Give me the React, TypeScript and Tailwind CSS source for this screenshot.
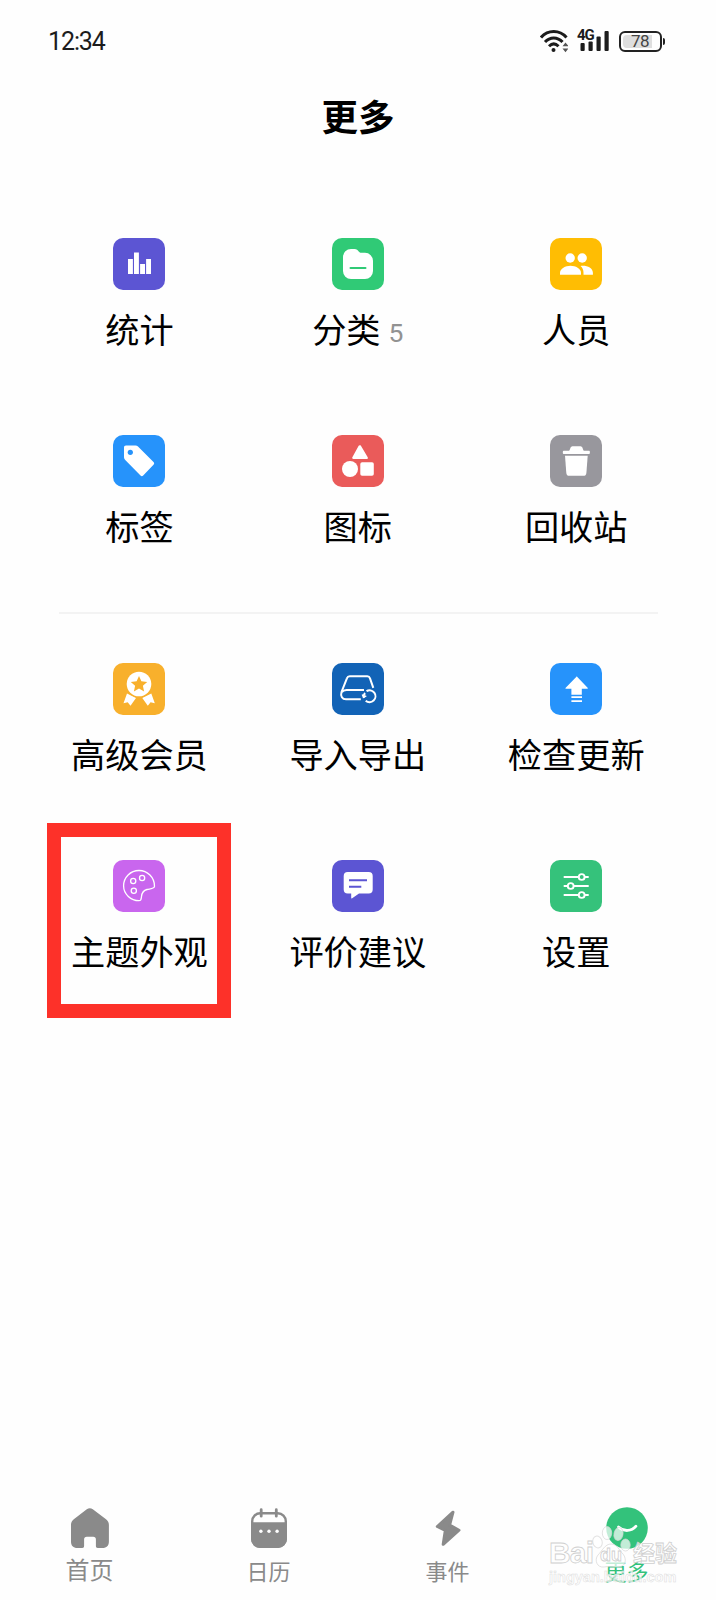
import type { ReactNode } from 'react';

interface Tile {
  label: string;
  bg: string;
  icon: ReactNode;
  count?: number;
  highlighted?: boolean;
}

interface Tab {
  label: string;
  icon: ReactNode;
  className: string;
}

const libraryTiles: Tile[] = [
  {
    label: '统计',
    bg: 'bg-[#5c55d3]',
    icon: <path d="M15 21h4.9v15H15zM21 14.6h4.9V36H21zM27.1 26H32v10h-4.9zM33.1 21H38v15h-4.9z" />,
  },
  {
    label: '分类',
    bg: 'bg-[#30ca76]',
    count: 5,
    icon: (
      <>
        <path d="M11 19a8 8 0 0 1 8-8h3.500c2.200 0 3.200 1 4.200 2.500.8 1 1.500 1.300 2.500 1.300H33a8 8 0 0 1 8 8V33a8 8 0 0 1-8 8H19a8 8 0 0 1-8-8z" />
        <path d="M18.500 30h15" stroke="#30ca76" strokeWidth="2" strokeLinecap="round" />
      </>
    ),
  },
  {
    label: '人员',
    bg: 'bg-[#ffbd03]',
    icon: (
      <>
        <circle cx="20.200" cy="20" r="4.700" />
        <circle cx="32.200" cy="20" r="4.700" />
        <path d="M10 36.800v-2C10 30.500 15.500 27.700 20.500 27.700S31 30.500 31 34.800v2z" />
        <path d="M30.500 28c5.500-1 12.400 1.500 12.400 6.800v2H33.500v-2c0-2.800-1-5.200-3-6.800z" />
      </>
    ),
  },
  {
    label: '标签',
    bg: 'bg-[#2693fb]',
    icon: (
      <>
        <path d="M13 10.500h9.500c1 0 1.800.3 2.500 1L40.500 27c.9.9.9 1.800 0 2.700L30.200 40.500c-.9.900-1.800.9-2.700 0L12 24.800c-.7-.7-1-1.500-1-2.500v-9.800c0-1.300.7-2 2-2z" />
        <circle cx="17.300" cy="17.300" r="2.600" fill="#2693fb" />
      </>
    ),
  },
  {
    label: '图标',
    bg: 'bg-[#ea5b5a]',
    icon: (
      <>
        <path d="M27.800 11.500l6.800 11.300H21.500z" stroke="#fff" strokeWidth="2.600" strokeLinejoin="round" />
        <circle cx="18" cy="34" r="8" />
        <rect x="28.300" y="27.200" width="13.500" height="13.600" rx="1.800" />
      </>
    ),
  },
  {
    label: '回收站',
    bg: 'bg-[#98979d]',
    icon: (
      <>
        <path d="M13.500 15.700h5.500c1.200-.3 1-4.500 3.500-4.500h8c2.500 0 2.300 4.200 3.500 4.500h5.300c.8 0 .8 3.200 0 3.200H13.500c-.9 0-.9-3.200 0-3.200z" />
        <path d="M15 20.700h22.700L36.400 38c-.2 2-1.200 2.800-3 2.800H19.300c-1.800 0-2.800-.8-3-2.800z" />
      </>
    ),
  },
];

const appTiles: Tile[] = [
  {
    label: '高级会员',
    bg: 'bg-[#f8b02c]',
    icon: (
      <>
        <path d="M14 30.500l9 4.500-5.500 7.700-2.800-3.500-4.200 1zM38.300 30.500l-9 4.500 5.500 7.700 2.800-3.500 4.200 1z" />
        <circle cx="26" cy="21" r="13.300" fill="#f8b02c" />
        <circle cx="26" cy="21" r="12.300" />
        <path d="M26 13l2.400 5.300 5.800.6-4.300 3.900 1.200 5.700L26 25.600l-5.100 2.900 1.200-5.700-4.300-3.900 5.800-.6z" fill="#f8b02c" />
      </>
    ),
  },
  {
    label: '导入导出',
    bg: 'bg-[#1263b6]',
    icon: (
      <g fill="none" stroke="#fff" strokeWidth="2">
        <path d="M41.300 24.800L38 15.300c-.5-1.500-1.200-2-2.700-2H17.800c-1.500 0-2.400.6-2.900 2L9.500 29c-1.200 4 .7 7.300 4.500 7.300h14.800" />
        <path d="M32 27H14.500c-2 0-3.800.8-4.700 2.200" />
        <path d="M34.500 28.200a5.900 5.900 0 1 1-.8 9.500" />
        <path d="M31.800 35a5.900 5.900 0 0 1 1.200-5" />
        <path d="M30.300 31.500l1.300 2.700 2.700-1.300" strokeWidth="1.500" />
      </g>
    ),
  },
  {
    label: '检查更新',
    bg: 'bg-[#2693fb]',
    icon: (
      <path d="M26.200 13.900c.4-.4.700-.4 1.100 0l10.300 10.900c.5.600.2 1-.5 1h-5.300v6H21.400v-6h-5.200c-.8 0-1-.4-.5-1zM21.400 33.200H32v1.900H21.400zM21.400 37.200H32v1.900H21.400z" />
    ),
  },
  {
    label: '主题外观',
    bg: 'bg-[#c966ee]',
    highlighted: true,
    icon: (
      <g fill="none" stroke="#fff" strokeWidth="1.300" strokeLinejoin="round">
        <path d="M41.500 26.300c0-9-7-15.800-15.500-15.800S10.600 17.300 10.600 25.800 18 40.700 26 40.700c2.400 0 2.200-2 2.500-4.200.4-3.800 2-6.100 5.500-7 3.300-.8 7.500-.7 7.500-3.200z" />
        <circle cx="20.200" cy="21" r="2.600" />
        <circle cx="29.100" cy="18" r="2.600" />
        <circle cx="20.800" cy="30.700" r="2.600" />
      </g>
    ),
  },
  {
    label: '评价建议',
    bg: 'bg-[#5c55d3]',
    icon: (
      <>
        <path d="M15.700 12h21a4 4 0 0 1 4 4v13.500a4 4 0 0 1-4 4H27l-6.800 4.800c-.7.400-1 .2-1-.5v-4.300h-3.500a4 4 0 0 1-4-4V16a4 4 0 0 1 4-4z" />
        <path d="M17 20.200h18M17 26.700h12.300" stroke="#5c55d3" strokeWidth="2" />
      </>
    ),
  },
  {
    label: '设置',
    bg: 'bg-[#35c27b]',
    icon: (
      <g fill="#35c27b" stroke="#fff" strokeWidth="1.900">
        <path d="M13.700 17h25M13.700 26h25M13.700 35h25" />
        <circle cx="31.700" cy="17" r="2.900" />
        <circle cx="20.700" cy="26" r="2.900" />
        <circle cx="31.700" cy="35" r="2.900" />
      </g>
    ),
  },
];

const tabs: Tab[] = [
  {
    label: '首页',
    className: 'text-[#8a8a8a] text-[24px] [&>span]:-translate-y-px',
    icon: (
      <path
        fillRule="evenodd"
        d="M17.800 2.300c2-1.500 4-1.500 6 0L37 12.200c1.900 1.400 2.900 3.300 2.900 5.600V34.500c0 4.300-2.200 6.500-6.500 6.500h-4.600c-1.300 0-1.900-.7-1.900-2v-6.500c0-2-.9-2.800-2.700-2.800h-6.400c-1.800 0-2.700.9-2.700 2.800V39c0 1.300-.6 2-1.900 2H8.500C4.200 41 2 38.800 2 34.500V17.800c0-2.300.9-4.200 2.800-5.600z"
      />
    ),
  },
  {
    label: '日历',
    className: 'text-[#8a8a8a] text-[22px]',
    icon: (
      <>
        <rect x="4.200" y="6.200" width="33.600" height="33.600" rx="8" fill="none" stroke="currentColor" strokeWidth="2.400" />
        <path d="M3 15.300h36V32a9 9 0 0 1-9 9H12a9 9 0 0 1-9-9z" />
        <path d="M13.200 2.700v6.500M28.300 2.700v6.500" stroke="currentColor" strokeWidth="2.800" strokeLinecap="round" />
        <g fill="#fff">
          <circle cx="12.900" cy="24.300" r="1.700" />
          <circle cx="21" cy="24.300" r="1.700" />
          <circle cx="29.100" cy="24.300" r="1.700" />
        </g>
      </>
    ),
  },
  {
    label: '事件',
    className: 'text-[#8a8a8a] text-[22px]',
    icon: (
      <path
        d="M26 5.200L10.300 19.500l8 4L16.200 37.300 32 23.200l-9.400-5.200z"
        stroke="currentColor"
        strokeWidth="3"
        strokeLinejoin="round"
      />
    ),
  },
  {
    label: '更多',
    className: 'text-[#33c27b] text-[22px]',
    icon: (
      <>
        <circle cx="21" cy="21" r="20.800" />
        <path d="M12.500 20c5.500 5 13 4.500 17.500-.8" fill="none" stroke="#fff" strokeWidth="2.800" strokeLinecap="round" />
      </>
    ),
  },
];

const StatusBar = () => (
  <header className="flex h-[82px] items-center justify-between pl-12 pr-[51px] text-[#1c1c1c]">
    <span className="mt-[2px] font-[Roboto] text-[25px] leading-7 tracking-[-1.1px]">12:34</span>
    <div className="flex items-center">
      <svg className="h-[24px] w-[28px]" viewBox="0 0 28 24" fill="none" stroke="currentColor" strokeWidth="3">
        <path d="M1 8.500C8 .5 19.500.5 26.500 8.500" />
        <path d="M5 13C10 7.500 17.500 7.500 22.500 13" />
        <path d="M9 17.200c3-3 6.500-3 9.500 0" />
        <circle cx="13.500" cy="21" r="2" fill="currentColor" stroke="none" />
        <path d="M22.500 17.200l3-3.700 3 3.700zM22.500 19.500l3 3.700 3-3.700z" fill="#555" stroke="none" />
      </svg>
      <div className="relative ml-[10px] h-[24px] w-[32px]">
        <svg className="h-[24px] w-[32px]" viewBox="0 0 32 24" fill="currentColor">
          <rect x="2.500" y="14" width="4.200" height="8" rx="1" />
          <rect x="10.500" y="12.500" width="4.200" height="9.500" rx="1" />
          <rect x="18.500" y="7.500" width="4.200" height="14.500" rx="1" />
          <rect x="26.500" y="2" width="4.200" height="20" rx="1" />
        </svg>
        <span className="absolute -left-px top-0 font-[Roboto] text-[15px] font-bold leading-[13px] tracking-[-1.2px]">4G</span>
      </div>
      <div className="ml-[9px] flex items-center">
        <div className="flex h-[21px] w-[43px] rounded-[6px] border-[2px] border-[#222] p-[2px]">
          <div className="flex w-[29px] items-center justify-end rounded-l-[4px] bg-[#dedede] pr-[3px] pt-px font-[Roboto] text-[17px] leading-none tracking-[-0.500px] text-[#444]">
            78
          </div>
        </div>
        <div className="ml-px h-[7px] w-[2px] rounded-r bg-[#222]" />
      </div>
    </div>
  </header>
);

const TileButton = ({ label, bg, icon, count, highlighted }: Tile) => (
  <button className="relative flex h-[197px] flex-col items-center">
    {highlighted && <span className="absolute left-[17px] top-[-37px] h-[195px] w-[184px] border-[14px] border-[#fd3129]" />}
    <span className={`block size-[52px] rounded-[10px] ${bg}`}>
      <svg className="size-[52px]" viewBox="0 0 52 52" fill="#fff">
        {icon}
      </svg>
    </span>
    <span className="mt-[18px] flex items-baseline whitespace-nowrap text-[34.2px] leading-10">
      {label}
      {count !== undefined && <span className="ml-2 -translate-y-px font-[Roboto] text-[26.5px] text-[#929292]">{count}</span>}
    </span>
  </button>
);

const TileGrid = ({ tiles }: { tiles: Tile[] }) => (
  <div className="grid grid-cols-3 pl-[30.2px] pr-[30.6px]">
    {tiles.map((tile) => (
      <TileButton key={tile.label} {...tile} />
    ))}
  </div>
);

const TabBar = () => (
  <nav className="mt-auto grid grid-cols-4 pb-[18px]">
    {tabs.map((tab) => (
      <button key={tab.label} className={`flex flex-col items-center leading-6 ${tab.className}`}>
        <svg className="size-[42px]" viewBox="0 0 42 42" fill="currentColor">
          {tab.icon}
        </svg>
        <span className="mt-[9px]">{tab.label}</span>
      </button>
    ))}
  </nav>
);

const Watermark = () => (
  <div className="pointer-events-none absolute bottom-[14px] left-[549px] w-[130px] text-white/70">
    <svg className="absolute left-[40px] top-[-18px] h-[50px] w-[46px]" viewBox="0 0 46 50" fill="#fff" fillOpacity="0.7" stroke="#d5d5d5" strokeOpacity="0.7">
      <ellipse cx="8.500" cy="18" rx="4.700" ry="6" transform="rotate(-15 8.500 18)" />
      <ellipse cx="18" cy="9" rx="4.700" ry="6.500" />
      <ellipse cx="29.500" cy="10" rx="4.500" ry="6.500" transform="rotate(12 29.500 10)" />
      <ellipse cx="36.500" cy="21" rx="4.700" ry="6" />
      <path d="M22 20c6 0 8 6 12 10 4 5 3 13-5 13-4 0-10-1-14 0-7 1-10-7-6-12 4-4 7-11 13-11z" />
    </svg>
    <div className="relative flex h-[27px] items-center font-bold leading-[27px] [-webkit-text-stroke:0.8px_#cfcfcf]">
      <span className="-mt-[6px] w-[51px] font-['Liberation_Sans'] text-[30px] tracking-[-0.8px]">Bai</span>
      <span className="w-[33px] font-['Liberation_Sans'] text-[18px]">du</span>
      <span className="-mt-[9px] text-[22px]">经验</span>
    </div>
    <div className="relative -mt-px whitespace-nowrap font-['Liberation_Sans'] text-[14.5px] font-bold leading-[18px] [-webkit-text-stroke:0.5px_#dcdcdc]">
      jingyan.baidu.com
    </div>
  </div>
);

const App = () => (
  <div className="relative flex h-[1600px] w-[716px] flex-col overflow-hidden bg-[#fefefe] font-['Noto_Sans_CJK_SC',sans-serif] text-black">
    <StatusBar />
    <h1 className="h-[156px] pt-[11px] text-center text-[36.5px] font-bold leading-[46px]">更多</h1>
    <TileGrid tiles={libraryTiles} />
    <div className="relative -mt-5 mb-[49px] ml-[59px] h-[2px] w-[599px] shrink-0 bg-[#f3f3f3]" />
    <TileGrid tiles={appTiles} />
    <TabBar />
    <Watermark />
  </div>
);

export default App;
